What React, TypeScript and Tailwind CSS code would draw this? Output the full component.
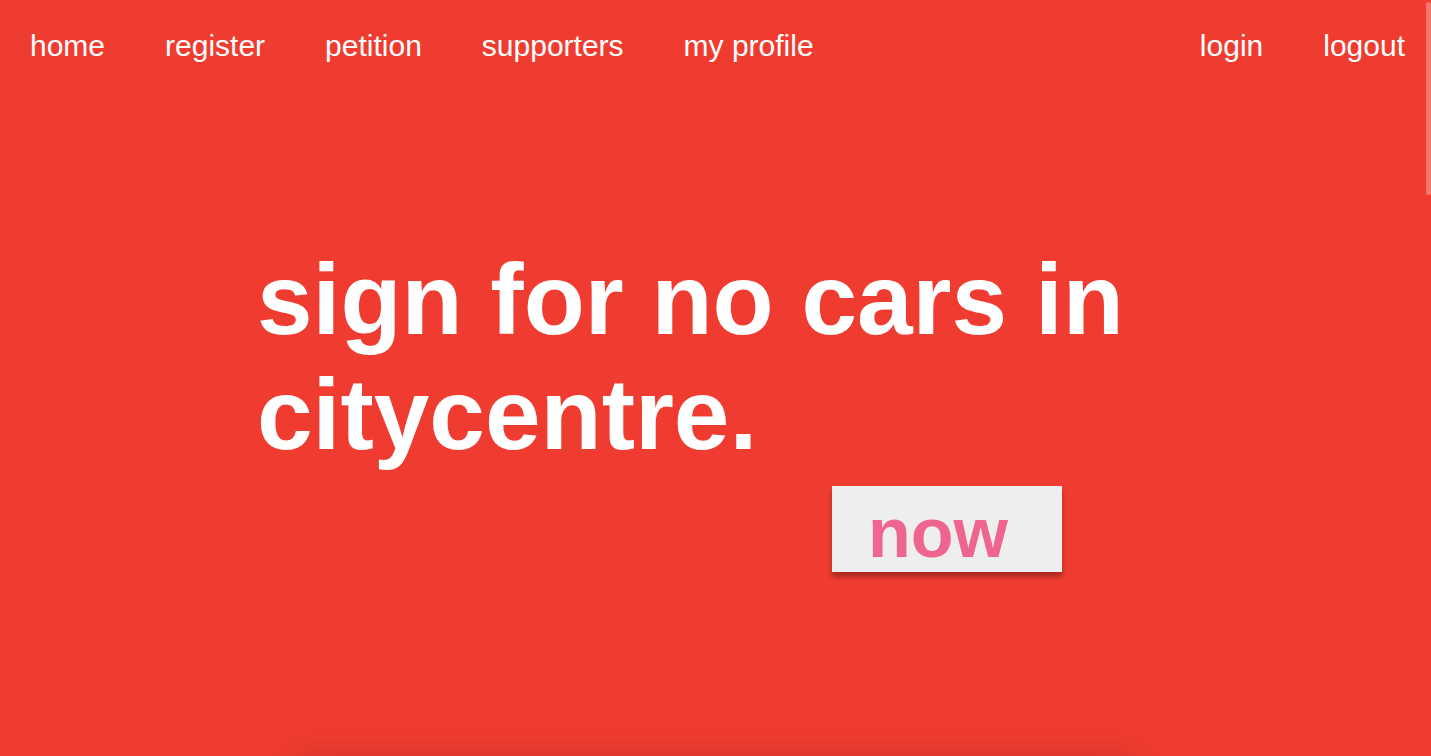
export default function App() {
  const left = ["home", "register", "petition", "supporters", "my profile"];
  const right = ["login", "logout"];
  return (
    <div
      className="relative h-screen w-full overflow-hidden bg-[#F03C30] text-white"
      style={{ fontFamily: '"Liberation Sans", Arial, Helvetica, sans-serif' }}
    >
      <nav className="flex justify-between pt-[29px] pl-[30px] pr-[26px] text-[30px] leading-[34px]">
        <ul className="flex gap-[60px]">
          {left.map((t) => (
            <li key={t}>
              <a href="#" className="text-white">{t}</a>
            </li>
          ))}
        </ul>
        <ul className="flex gap-[60px]">
          {right.map((t) => (
            <li key={t}>
              <a href="#" className="text-white">{t}</a>
            </li>
          ))}
        </ul>
      </nav>

      <main className="mt-[179px]">
        <h1 className="ml-[257px] w-[900px] text-[100px] font-bold leading-[115px]">
          sign for no cars in citycentre.
        </h1>
        <div className="mt-[14px] ml-[832px]">
          <button className="block h-[86px] w-[230px] bg-[#EEEEEE] pl-[36px] pt-[7px] text-left text-[70px] font-bold leading-[70px] text-[#EE6690] shadow-[0_5px_5px_rgba(0,0,0,0.3)]">
            now
          </button>
        </div>
        <section className="mx-auto mt-[184px] h-[300px] w-[840px] bg-[#F03C30] shadow-[0_0_30px_rgba(0,0,0,0.14)]" />
      </main>

      <div className="absolute right-0 top-[2px] h-[193px] w-[5px] rounded-full bg-white/30" />
    </div>
  );
}
